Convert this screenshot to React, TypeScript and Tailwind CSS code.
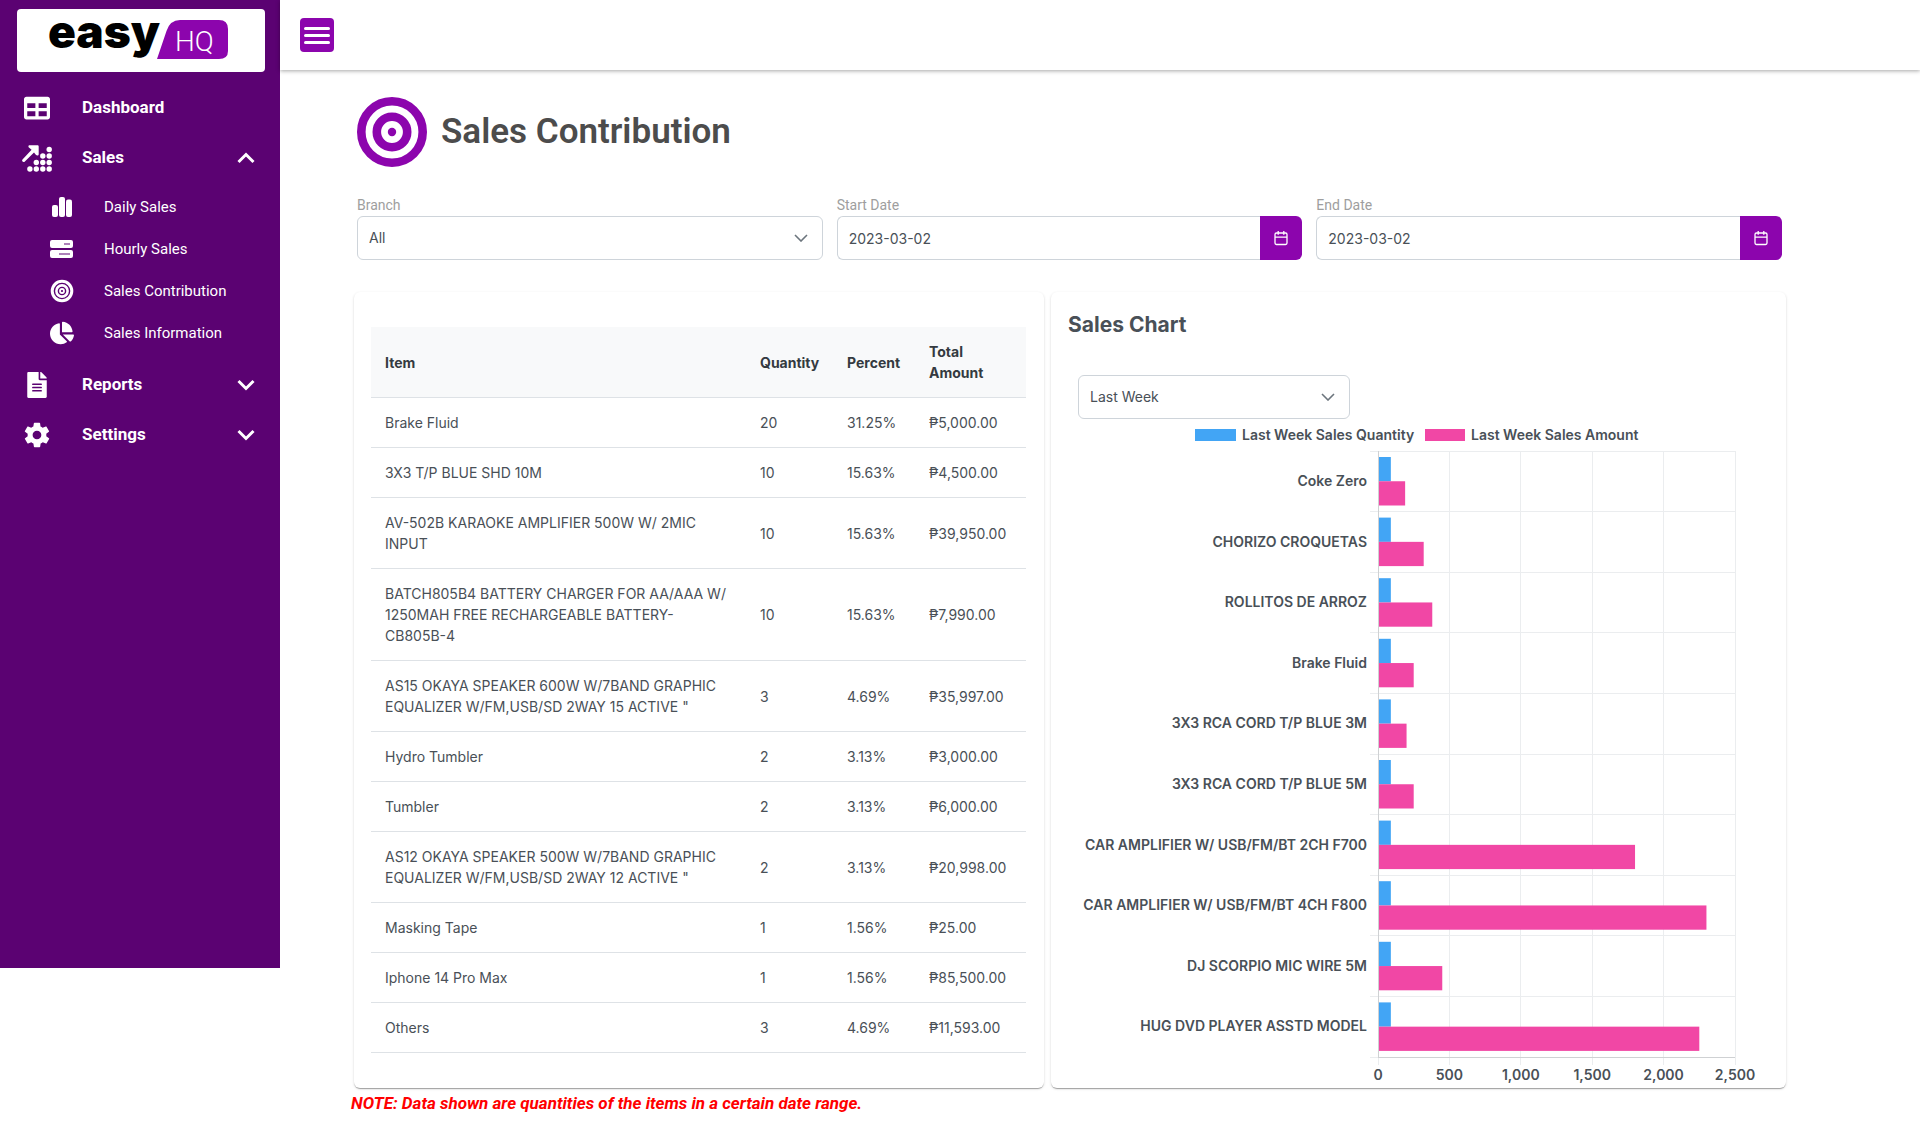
import React from 'react';
import { FaTable, FaChartPie, FaFileAlt } from 'react-icons/fa';
import { IoMdSettings } from 'react-icons/io';

interface ItemRow {
  item: string;
  quantity: number;
  percent: string;
  total: string;
}

interface ChartRow {
  label: string;
  quantity: number;
  amount: number;
}

const items: ItemRow[] = [
  { item: 'Brake Fluid', quantity: 20, percent: '31.25%', total: '₱5,000.00' },
  { item: '3X3 T/P BLUE SHD 10M', quantity: 10, percent: '15.63%', total: '₱4,500.00' },
  { item: 'AV-502B KARAOKE AMPLIFIER 500W W/ 2MIC INPUT', quantity: 10, percent: '15.63%', total: '₱39,950.00' },
  { item: 'BATCH805B4 BATTERY CHARGER FOR AA/AAA W/ 1250MAH FREE RECHARGEABLE BATTERY-CB805B-4', quantity: 10, percent: '15.63%', total: '₱7,990.00' },
  { item: 'AS15 OKAYA SPEAKER 600W W/7BAND GRAPHIC EQUALIZER W/FM,USB/SD 2WAY 15 ACTIVE "', quantity: 3, percent: '4.69%', total: '₱35,997.00' },
  { item: 'Hydro Tumbler', quantity: 2, percent: '3.13%', total: '₱3,000.00' },
  { item: 'Tumbler', quantity: 2, percent: '3.13%', total: '₱6,000.00' },
  { item: 'AS12 OKAYA SPEAKER 500W W/7BAND GRAPHIC EQUALIZER W/FM,USB/SD 2WAY 12 ACTIVE "', quantity: 2, percent: '3.13%', total: '₱20,998.00' },
  { item: 'Masking Tape', quantity: 1, percent: '1.56%', total: '₱25.00' },
  { item: 'Iphone 14 Pro Max', quantity: 1, percent: '1.56%', total: '₱85,500.00' },
  { item: 'Others', quantity: 3, percent: '4.69%', total: '₱11,593.00' },
];

const chartRows: ChartRow[] = [
  { label: 'Coke Zero', quantity: 90, amount: 190 },
  { label: 'CHORIZO CROQUETAS', quantity: 90, amount: 320 },
  { label: 'ROLLITOS DE ARROZ', quantity: 90, amount: 380 },
  { label: 'Brake Fluid', quantity: 90, amount: 250 },
  { label: '3X3 RCA CORD T/P BLUE 3M', quantity: 90, amount: 200 },
  { label: '3X3 RCA CORD T/P BLUE 5M', quantity: 90, amount: 250 },
  { label: 'CAR AMPLIFIER W/ USB/FM/BT 2CH F700', quantity: 90, amount: 1800 },
  { label: 'CAR AMPLIFIER W/ USB/FM/BT 4CH F800', quantity: 90, amount: 2300 },
  { label: 'DJ SCORPIO MIC WIRE 5M', quantity: 90, amount: 450 },
  { label: 'HUG DVD PLAYER ASSTD MODEL', quantity: 90, amount: 2250 },
];

const ticks = [0, 500, 1000, 1500, 2000, 2500];

/* ICONS */

const TargetIcon = ({ className }: { className: string }) => (
  <svg viewBox="0 0 70 70" className={className} fill="none" stroke="currentColor" aria-hidden="true">
    <circle cx="35" cy="35" r="30.7" strokeWidth="8.6" />
    <circle cx="35" cy="35" r="15.2" strokeWidth="8.6" />
    <circle cx="35" cy="35" r="4.2" fill="currentColor" stroke="none" />
  </svg>
);

const SmallTargetIcon = () => (
  <svg viewBox="0 0 24 24" className="size-6" fill="none" stroke="currentColor" aria-hidden="true">
    <circle cx="12" cy="12" r="9.8" strokeWidth="3" />
    <circle cx="12" cy="12" r="5.6" strokeWidth="2.6" />
    <circle cx="12" cy="12" r="2" strokeWidth="1.8" />
  </svg>
);

const SalesIcon = () => (
  <svg viewBox="0 0 30 27" className="h-[27px] w-[30px]" fill="currentColor" aria-hidden="true">
    <path d="M6.4 1.4C6.4.7 6.9.2 7.6.2H15.4c.8 0 1.3.5 1.3 1.3V9.3c0 .8-.6 1.2-1.2 1.2-.7 0-1.200-.2-1.700-.7L12 7.600 2.600 16.700c-.8.7-2 .2-2.400-.6-.2-.6-.1-1.200.3-1.700L9.600 4.700 7.200 2.800C6.700 2.400 6.400 2 6.400 1.400Z" />
    {[
      [27.2, 4.5],
      [20.8, 11], [27.2, 11],
      [14.3, 17.5], [20.8, 17.5], [27.2, 17.5],
      [7.9, 24], [14.3, 24], [20.8, 24], [27.2, 24],
    ].map(([cx, cy]) => (
      <circle key={`${cx}-${cy}`} cx={cx} cy={cy} r="2.7" />
    ))}
  </svg>
);

const BarsIcon = () => (
  <svg viewBox="0 0 20 20" className="size-5" fill="currentColor" aria-hidden="true">
    <rect x="0" y="8" width="6" height="12" rx="2" />
    <rect x="7" y="0" width="6" height="20" rx="2" />
    <rect x="14" y="2.5" width="6" height="17.5" rx="2" />
  </svg>
);

const ServerIcon = () => (
  <svg viewBox="0 0 24 18" className="h-[18px] w-6" fill="currentColor" aria-hidden="true">
    <path fillRule="evenodd" d="M2 0H21a2 2 0 0 1 2 2V6a2 2 0 0 1-2 2H2A2 2 0 0 1 0 6V2A2 2 0 0 1 2 0ZM14 3.500V4.600H20V3.500Z" />
    <path fillRule="evenodd" d="M2 10H21a2 2 0 0 1 2 2V16a2 2 0 0 1-2 2H2A2 2 0 0 1 0 16V12A2 2 0 0 1 2 10ZM9 13.500V14.600H20V13.500Z" />
  </svg>
);

const MenuChevron = ({ open }: { open?: boolean }) => (
  <svg viewBox="0 0 18 12" className="h-3 w-[18px]" fill="none" stroke="currentColor" strokeWidth="3" aria-hidden="true">
    <path d={open ? 'M1.500 10 9 2.500l7.500 7.500' : 'M1.500 2 9 9.500l7.500-7.500'} />
  </svg>
);

const CalendarIcon = () => (
  <svg viewBox="0 0 14 16" className="h-4 w-[14px]" fill="none" stroke="currentColor" strokeWidth="1.3" aria-hidden="true">
    <rect x="1" y="3" width="12" height="11.5" rx="1.4" />
    <path d="M1 7.200H13M4.200 1V4.800M9.800 1V4.800" />
  </svg>
);

const Logo = () => (
  <svg viewBox="0 0 248 63" className="block h-[63px] w-full overflow-visible" role="img" aria-label="easyHQ">
    <path d="M140 50 149.500 22Q153 11 163 11H202Q211 11 211 20V42Q211 50 202 50Z" fill="#8c05ad" />
    <text x="31" y="39" className="fill-black font-['Inter'] text-[46px] font-black">easy</text>
    <text x="158" y="42" className="fill-white font-['Roboto'] text-[28px] font-light">HQ</text>
  </svg>
);

/* SIDEBAR */

interface NavItemProps {
  icon: React.ReactNode;
  label: string;
  group?: 'open' | 'closed';
}

const NavItem: React.FC<NavItemProps> = ({ icon, label, group }) => {
  const content = (
    <>
      <span className="flex w-[74px] justify-center">{icon}</span>
      <span className="pl-2">{label}</span>
      {group && (
        <span className="ml-auto pr-[25px]">
          <MenuChevron open={group === 'open'} />
        </span>
      )}
    </>
  );
  const style = 'flex h-[50px] w-full items-center text-left text-[17px] font-bold';
  return group ? (
    <button type="button" aria-expanded={group === 'open'} className={style}>{content}</button>
  ) : (
    <a href="#" className={style}>{content}</a>
  );
};

const SubItem: React.FC<{ icon: React.ReactNode; label: string }> = ({ icon, label }) => (
  <li>
    <a href="#" className="flex h-[42px] items-center pl-[50px] text-[15px]">
      <span className="flex w-6 justify-center">{icon}</span>
      <span className="pl-[30px]">{label}</span>
    </a>
  </li>
);

const Sidebar = () => (
  <aside className="h-[86vh] w-[280px] shrink-0 bg-[#5b0272] text-white">
    <div className="pt-[9px] pr-[15px] pb-[11px] pl-[17px]">
      <div className="rounded bg-white">
        <Logo />
      </div>
    </div>
    <nav>
      <NavItem icon={<FaTable className="size-[26px]" />} label="Dashboard" />
      <NavItem icon={<SalesIcon />} label="Sales" group="open" />
      <ul className="pt-[3px] pb-[6px]">
        <SubItem icon={<BarsIcon />} label="Daily Sales" />
        <SubItem icon={<ServerIcon />} label="Hourly Sales" />
        <SubItem icon={<SmallTargetIcon />} label="Sales Contribution" />
        <SubItem icon={<FaChartPie className="size-6" />} label="Sales Information" />
      </ul>
      <NavItem icon={<FaFileAlt className="size-[26px]" />} label="Reports" group="closed" />
      <NavItem icon={<IoMdSettings className="size-[30px]" />} label="Settings" group="closed" />
    </nav>
  </aside>
);

/* FILTERS */

interface DropdownProps {
  id: string;
  options: string[];
  label?: string;
}

const Dropdown: React.FC<DropdownProps> = ({ id, options, label }) => (
  <div className="relative">
    <select
      id={id}
      aria-label={label}
      className="h-11 w-full appearance-none rounded-md border border-[#ced4da] bg-white px-[11px] font-['Inter'] text-sm text-[#495057]"
    >
      {options.map((o) => (
        <option key={o}>{o}</option>
      ))}
    </select>
    <svg viewBox="0 0 14 8" className="pointer-events-none absolute top-[18px] right-[15px] h-2 w-[14px]" fill="none" stroke="#6c757d" strokeWidth="1.6">
      <path d="M1 1l6 6 6-6" />
    </svg>
  </div>
);

const DateField: React.FC<{ id: string; label: string; value: string }> = ({ id, label, value }) => (
  <div>
    <label htmlFor={id} className="block text-sm/[21px] text-[#9e9e9e]">{label}</label>
    <div className="flex">
      <input
        id={id}
        type="text"
        defaultValue={value}
        className="h-11 min-w-0 grow rounded-l-md border border-r-0 border-[#ced4da] px-[11px] font-['Inter'] text-sm text-[#495057]"
      />
      <button type="button" aria-label={`Choose ${label}`} className="flex h-11 w-[42px] items-center justify-center rounded-r-md bg-[#8c05ad] text-white">
        <CalendarIcon />
      </button>
    </div>
  </div>
);

/* TABLE */

const ItemsTable = () => (
  <table className="w-full table-fixed border-collapse text-left font-['Inter'] text-sm/[21px] text-[#495057]">
    <colgroup>
      <col />
      <col className="w-[87px]" />
      <col className="w-[82px]" />
      <col className="w-[111px]" />
    </colgroup>
    <thead>
      <tr className="border-b border-[#dee2e6] bg-[#f8f9fa] text-[#343a40]">
        <th className="p-[14px] font-bold">Item</th>
        <th className="p-[14px] font-bold">Quantity</th>
        <th className="p-[14px] font-bold">Percent</th>
        <th className="p-[14px] font-bold">Total Amount</th>
      </tr>
    </thead>
    <tbody>
      {items.map((row) => (
        <tr key={row.item} className="border-b border-[#dee2e6]">
          <td className="p-[14px]">{row.item}</td>
          <td className="p-[14px]">{row.quantity}</td>
          <td className="p-[14px]">{row.percent}</td>
          <td className="p-[14px]">{row.total}</td>
        </tr>
      ))}
    </tbody>
  </table>
);

/* CHART */

const LEFT = 310;
const TOP = 27;
const PLOT_WIDTH = 357;
const ROW = 60.6;
const BAR = 24.25;
const BOTTOM = TOP + ROW * chartRows.length;

const scaleX = (value: number) => LEFT + (value / 2500) * PLOT_WIDTH;

const SalesChart = () => (
  <svg viewBox="0 0 701 660" className="mt-[5px] block w-full font-['Inter'] text-[14px] font-semibold" role="img" aria-label="Last week sales by item">
    {/* Legend */}
    <rect x="127" y="5" width="41" height="12" fill="#42a5f5" />
    <text x="174" y="16" fill="#495057">Last Week Sales Quantity</text>
    <rect x="357" y="5" width="40" height="12" fill="#f147a5" />
    <text x="403" y="16" fill="#495057">Last Week Sales Amount</text>

    {/* Grid */}
    <g stroke="#ebedef" shapeRendering="crispEdges">
      {ticks.map((t) => (
        <line key={t} x1={scaleX(t)} x2={scaleX(t)} y1={TOP} y2={BOTTOM + 8} />
      ))}
      {[...chartRows, null].map((_, i) => (
        <line key={i} x1={LEFT - 8} x2={LEFT + PLOT_WIDTH} y1={TOP + i * ROW} y2={TOP + i * ROW} />
      ))}
    </g>

    {/* Bars */}
    {chartRows.map((row, i) => {
      const y = TOP + i * ROW + 6;
      return (
        <g key={row.label}>
          <text x={LEFT - 11} y={TOP + i * ROW + 35} textAnchor="end" fill="#495057">{row.label}</text>
          <rect x={LEFT} y={y} width={scaleX(row.quantity) - LEFT} height={BAR} fill="#42a5f5" />
          <rect x={LEFT} y={y + BAR} width={scaleX(row.amount) - LEFT} height={BAR} fill="#f147a5" />
        </g>
      );
    })}

    {/* Axes */}
    <g stroke="#cfd1d3" shapeRendering="crispEdges">
      <line x1={LEFT} x2={LEFT} y1={TOP} y2={BOTTOM} />
      <line x1={LEFT} x2={LEFT + PLOT_WIDTH} y1={BOTTOM} y2={BOTTOM} />
    </g>
    {ticks.map((t) => (
      <text key={t} x={scaleX(t)} y="656" textAnchor="middle" fill="#495057">{t.toLocaleString('en-US')}</text>
    ))}
  </svg>
);

const cardStyle =
  'rounded-md bg-white shadow-[0_2px_1px_-1px_rgba(0,0,0,0.2),0_1px_1px_0_rgba(0,0,0,0.14),0_1px_3px_0_rgba(0,0,0,0.12)]';

export default function App() {
  return (
    <div className="flex min-h-screen items-start bg-white font-['Roboto',sans-serif]">
      <Sidebar />
      <div className="min-w-0 grow">
        <header className="flex h-[70px] items-center bg-white pl-5 shadow-[0_1px_4px_rgba(0,0,0,0.35)]">
          <button type="button" aria-label="Toggle menu" className="flex size-[34px] flex-col items-center justify-center gap-1 rounded bg-[#8c05ad]">
            <span className="h-[3px] w-[26px] rounded-full bg-white" />
            <span className="h-[3px] w-[26px] rounded-full bg-white" />
            <span className="h-[3px] w-[26px] rounded-full bg-white" />
          </button>
        </header>

        <main className="pt-[27px] pr-[131px] pl-[71px]">
          <div className="flex items-center gap-[14px] pl-[6px]">
            <TargetIcon className="size-[70px] text-[#8c05ad]" />
            <h1 className="text-[35px] font-semibold text-[#4c4c4c]">Sales Contribution</h1>
          </div>

          <div className="mt-7 grid grid-cols-3 gap-[14px] pr-[7px] pl-[6px]">
            <div>
              <label htmlFor="branch" className="block text-sm/[21px] text-[#9e9e9e]">Branch</label>
              <Dropdown id="branch" options={['All']} />
            </div>
            <DateField id="start-date" label="Start Date" value="2023-03-02" />
            <DateField id="end-date" label="End Date" value="2023-03-02" />
          </div>

          <div className="mt-8 grid grid-cols-[46fr_49fr] gap-[7px] px-[3px]">
            <section className={`${cardStyle} py-[35px] pr-[18px] pl-[17px]`}>
              <ItemsTable />
            </section>
            <section className={`${cardStyle} px-[17px] pt-[19px]`}>
              <h2 className="font-['Inter'] text-[21px]/[28px] font-bold text-[#495057]">Sales Chart</h2>
              <div className="mt-9 ml-[10px] w-[272px]">
                <Dropdown id="period" label="Chart period" options={['Last Week']} />
              </div>
              <SalesChart />
            </section>
          </div>

          <p className="mt-[3px] text-[17px]/[24px] font-bold text-[#ff0000] italic">
            NOTE: Data shown are quantities of the items in a certain date range.
          </p>
        </main>
      </div>
    </div>
  );
}
